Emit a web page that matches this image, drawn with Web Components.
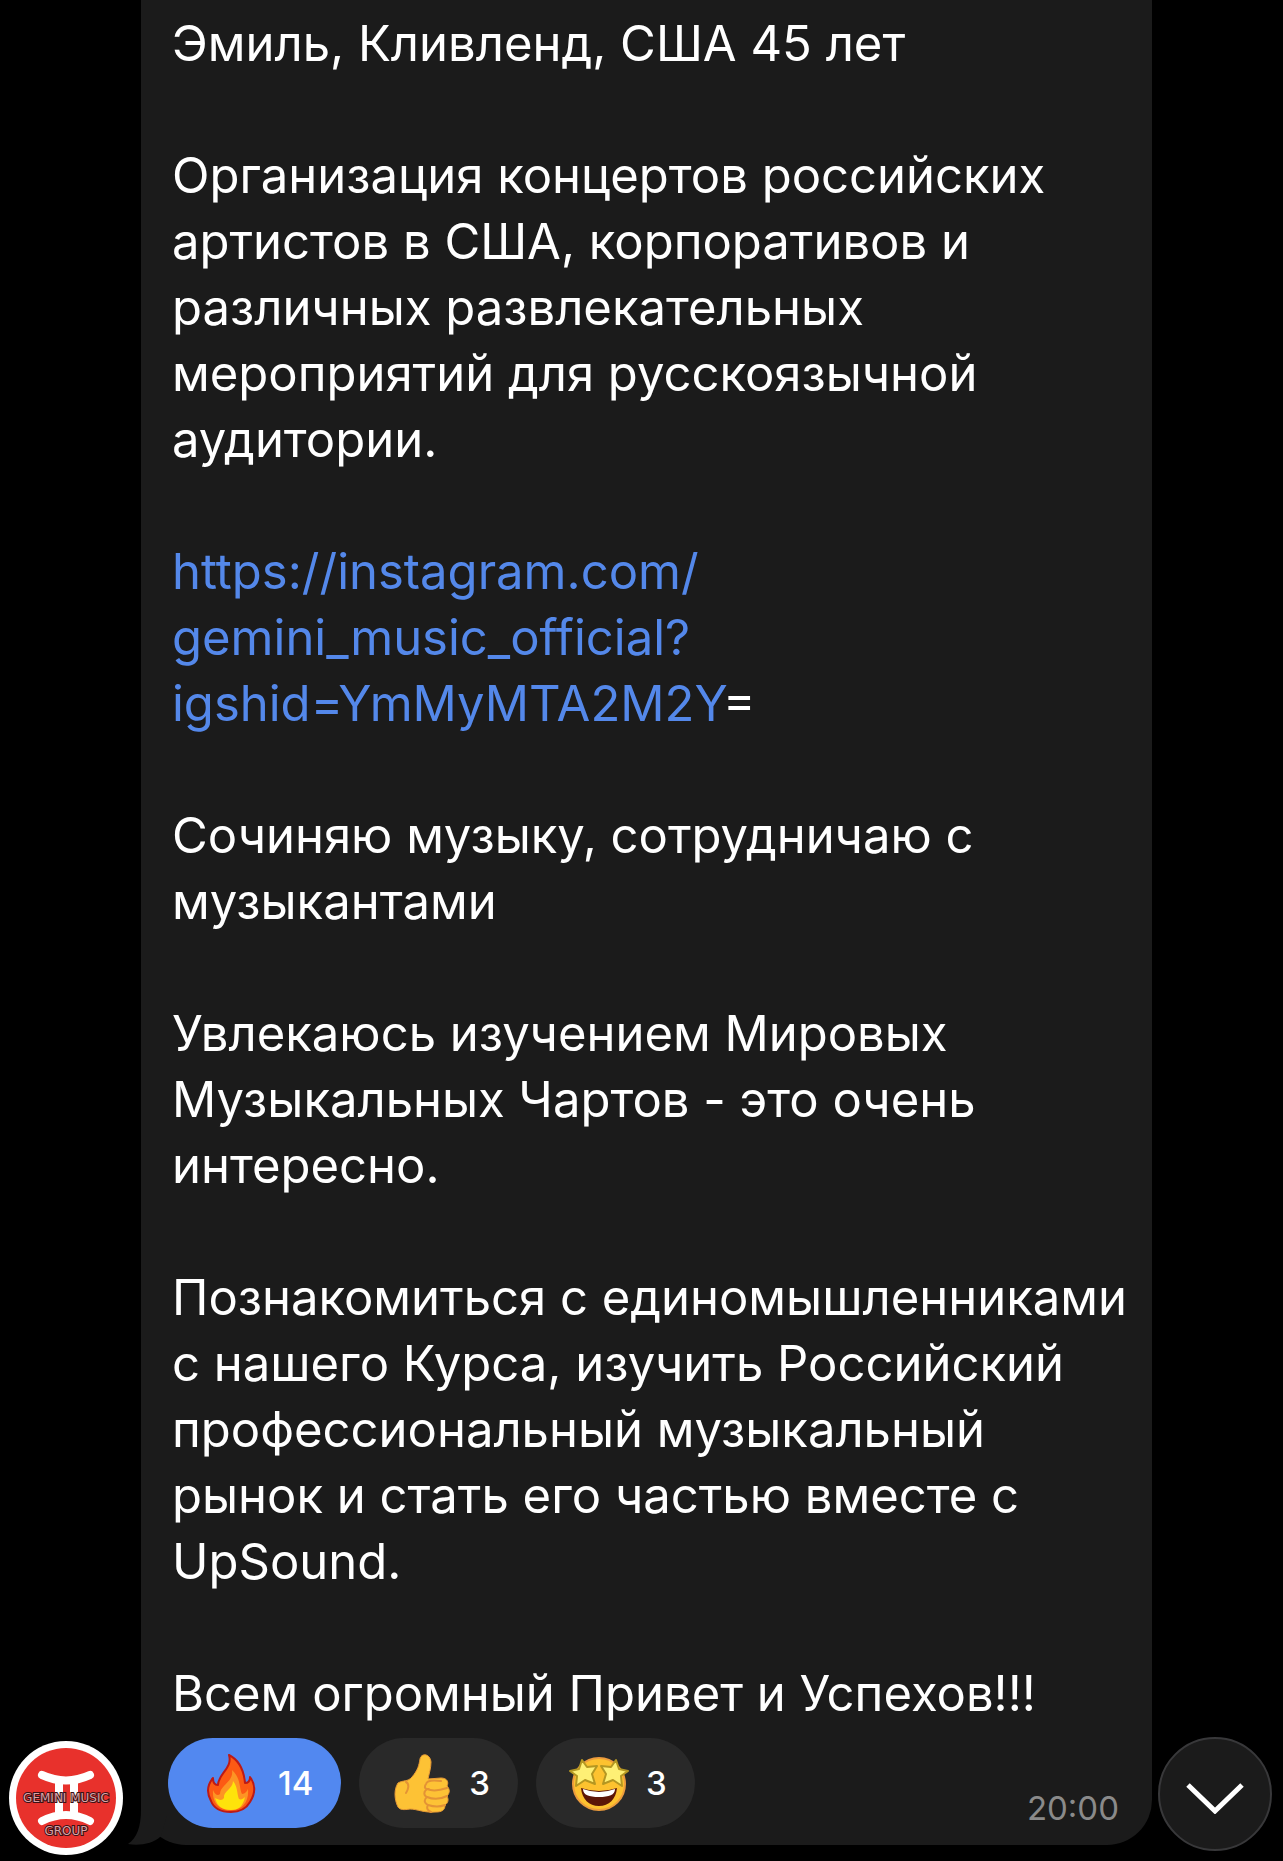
<!DOCTYPE html>
<html lang="ru">
<head>
<meta charset="utf-8">
<meta name="viewport" content="width=device-width, initial-scale=1">
<title>Чат</title>
<style>
  body {
    margin: 0;
    background: #000;
    color: #fff;
    font-family: Inter, "Noto Sans", sans-serif;
  }
</style>
</head>
<body>
<chat-row>
  <chat-avatar slot="avatar"></chat-avatar>
  <message-bubble time="20:00">
    <p>Эмиль, Кливленд, США 45 лет</p>
    <p>Организация концертов российских<br>артистов в США, корпоративов и<br>различных развлекательных<br>мероприятий для русскоязычной<br>аудитории.</p>
    <p><a href="https://instagram.com/gemini_music_official?igshid=YmMyMTA2M2Y">https://instagram.com/<br>gemini_music_official?<br>igshid=YmMyMTA2M2Y</a>=</p>
    <p>Сочиняю музыку, сотрудничаю с<br>музыкантами</p>
    <p>Увлекаюсь изучением Мировых<br>Музыкальных Чартов - это очень<br>интересно.</p>
    <p>Познакомиться с единомышленниками<br>с нашего Курса, изучить Российский<br>профессиональный музыкальный<br>рынок и стать его частью вместе с<br>UpSound.</p>
    <p>Всем огромный Привет и Успехов!!!</p>
    <reaction-pill slot="reactions" count="14" active>
      <svg viewBox="0 0 60 60" aria-hidden="true">
        <path d="M28 2C40 8 43 19 44 30C47 30 49 28 49 24C55 32 54 41 49 49C45 56 38 59 30 59C21 59 13 56 10 48C5 39 7 31 12 25C12 30 14 32 17 32C17 21 32 15 28 2Z" fill="#fc5a14" stroke="#bd1a16" stroke-width="2" stroke-linejoin="round"/>
        <path d="M31 17C40 25 38 35 41 41C44 41 46 38 47 36C48 47 43 57 30 57C17 57 11 49 12 37C14 42 17 43 19 41C19 32 33 29 31 17Z" fill="#fd9424"/>
        <path d="M32 28C37 34 36 42 38 46C40 47 42 46 44 44C42 53 38 57 30 57C21 57 16 53 14 45C18 47 21 48 23 45C22 38 32 36 32 28Z" fill="#fee30b"/>
      </svg>
    </reaction-pill>
    <reaction-pill slot="reactions" count="3">
      <svg viewBox="0 0 60 60" aria-hidden="true">
        <path d="M6 30C11 27 16 29 20 24C26 17 27 12 28 6C29 0 38 0 39 9C39 15 37 21 36 26L49 25C55 25 57 29 55 33C58 36 58 40 55 43C57 47 56 50 53 52C53 57 50 59 44 59C32 60 25 56 18 56C12 57 8 57 6 54C2 46 2 36 6 30Z" fill="#fdc235" stroke="#e89a35" stroke-width="1"/>
        <path d="M14 29C18 31 16 37 14 40M49 28C42 27 35 27 34 31C32 34 33 36 35 36C31 39 32 43 35 44C31 47 33 51 36 52C34 55 36 58 39 59M35 36C42 39 49 37 55 35M35 44C42 47 49 46 55 43M36 52C42 54 48 54 53 52" fill="none" stroke="#e49335" stroke-width="2" stroke-linecap="round"/>
      </svg>
    </reaction-pill>
    <reaction-pill slot="reactions" count="3">
      <svg viewBox="0 0 60 60" aria-hidden="true">
        <circle cx="30" cy="31" r="26" fill="#fdc22f" stroke="#ed9c3d" stroke-width="2"/>
        <path d="M12 35Q30 41 48 35C47 46 40 53 30 53S13 46 12 35Z" fill="#5c1607"/>
        <path d="M14 36Q30 42 46 36C46 42 40 44 30 44S14 42 14 36Z" fill="#fff"/>
        <g fill="#fef075" stroke="#b49722" stroke-width="2" stroke-linejoin="round">
          <path d="M13 7L18 14L28 13L23 21L26 31L16 27L7 33L8 23L1 18L10 16Z"/>
          <path d="M47 7L50 16L59 18L52 23L53 33L44 27L34 31L37 21L32 13L42 14Z"/>
        </g>
      </svg>
    </reaction-pill>
  </message-bubble>
  <scroll-button slot="action"></scroll-button>
</chat-row>

<script>
class ChatRow extends HTMLElement {
  constructor() {
    super();
    this.attachShadow({ mode: "open" }).innerHTML = `
      <style>
        :host {
          display: grid;
          grid-template-columns: 141px minmax(0, 1fr) 131px;
          align-items: end;
          padding-bottom: 16px;
        }
        .side {
          display: flex;
          justify-content: center;
        }
        .left { padding-right: 9px; margin-bottom: -10px; }
        .right { padding-right: 5px; margin-bottom: -6px; }
      </style>
      <div class="side left"><slot name="avatar"></slot></div>
      <slot></slot>
      <div class="side right"><slot name="action"></slot></div>
    `;
  }
}

class ChatAvatar extends HTMLElement {
  constructor() {
    super();
    this.attachShadow({ mode: "open" }).innerHTML = `
      <style>
        :host { display: block; width: 114px; height: 114px; }
        svg { display: block; width: 100%; height: 100%; }
        text {
          font: 12px "DejaVu Sans", sans-serif;
          fill: #d9a3a8;
          stroke: #3a1216;
          stroke-width: 2px;
          paint-order: stroke;
          text-anchor: middle;
        }
      </style>
      <svg viewBox="0 0 114 114" role="img" aria-label="Gemini Music Group">
        <circle cx="57" cy="57" r="57" fill="#fff"/>
        <circle cx="57" cy="57" r="50" fill="#e8312c"/>
        <g fill="none" stroke="#fff" stroke-width="8" stroke-linecap="round">
          <path d="M33 34Q57 45 81 34M33 80Q57 68 81 80"/>
          <path d="M50 40V74M65 40V74" stroke-linecap="butt"/>
        </g>
        <text x="57" y="61">GEMINI MUSIC</text>
        <text x="57" y="94">GROUP</text>
      </svg>
    `;
  }
}

class MessageBubble extends HTMLElement {
  constructor() {
    super();
    this.attachShadow({ mode: "open" });
  }

  connectedCallback() {
    this.shadowRoot.innerHTML = `
      <style>
        :host {
          display: block;
          position: relative;
          box-sizing: border-box;
          padding: 11px 12px 17px 27px;
          background: #1b1b1b;
          border-radius: 0 0 45px 45px;
        }
        .text {
          padding-left: 4px;
          font-size: 49px;
          line-height: 66px;
        }
        ::slotted(p) { margin: 0 0 66px; }
        ::slotted(p:last-of-type) { margin-bottom: 0; }
        .footer {
          display: flex;
          justify-content: space-between;
          align-items: flex-end;
          margin-top: 11px;
        }
        .reactions { display: flex; gap: 18px; }
        time {
          padding-right: 21px;
          color: #8a8a8a;
          font-size: 33px;
          line-height: 40px;
        }
        .tail {
          position: absolute;
          left: -14px;
          bottom: 0;
          width: 40px;
          height: 60px;
        }
      </style>
      <svg class="tail" viewBox="0 0 40 60" aria-hidden="true">
        <path d="M14 0V24C14 42 10 53 1 59C12 61 26 59 34 51L40 30V0Z" fill="#1b1b1b"/>
      </svg>
      <div class="text"><slot></slot></div>
      <div class="footer">
        <div class="reactions"><slot name="reactions"></slot></div>
        <time>${this.getAttribute("time")}</time>
      </div>
    `;
    this.querySelectorAll("a").forEach((link) => {
      link.style.color = "#5488ea";
      link.style.textDecoration = "none";
    });
  }
}

class ReactionPill extends HTMLElement {
  constructor() {
    super();
    this.attachShadow({ mode: "open" });
  }

  connectedCallback() {
    this.shadowRoot.innerHTML = `
      <style>
        :host { display: block; }
        button {
          display: flex;
          align-items: center;
          gap: 17px;
          height: 90px;
          padding: 0 28px 0 33px;
          border: 0;
          border-radius: 45px;
          background: #292929;
          color: #fff;
          font: 500 33px/40px Inter, "Noto Sans", sans-serif;
          cursor: pointer;
        }
        :host([active]) button { background: #5288f0; }
        ::slotted(svg) { display: block; width: 60px; height: 60px; }
      </style>
      <button type="button"><slot></slot><span>${this.getAttribute("count")}</span></button>
    `;
  }
}

class ScrollButton extends HTMLElement {
  constructor() {
    super();
    this.attachShadow({ mode: "open" }).innerHTML = `
      <style>
        :host { display: block; }
        button {
          display: grid;
          place-items: center;
          box-sizing: border-box;
          width: 114px;
          height: 114px;
          padding: 0;
          border: 2px solid #38383a;
          border-radius: 50%;
          background: #1b1b1b;
          cursor: pointer;
        }
        svg { display: block; width: 60px; height: 40px; }
      </style>
      <button type="button" aria-label="Вниз">
        <svg viewBox="0 0 60 40"><path d="M3 11L30 37L57 11" fill="none" stroke="#fff" stroke-width="5"/></svg>
      </button>
    `;
  }
}

customElements.define("chat-row", ChatRow);
customElements.define("chat-avatar", ChatAvatar);
customElements.define("message-bubble", MessageBubble);
customElements.define("reaction-pill", ReactionPill);
customElements.define("scroll-button", ScrollButton);
</script>
</body>
</html>
